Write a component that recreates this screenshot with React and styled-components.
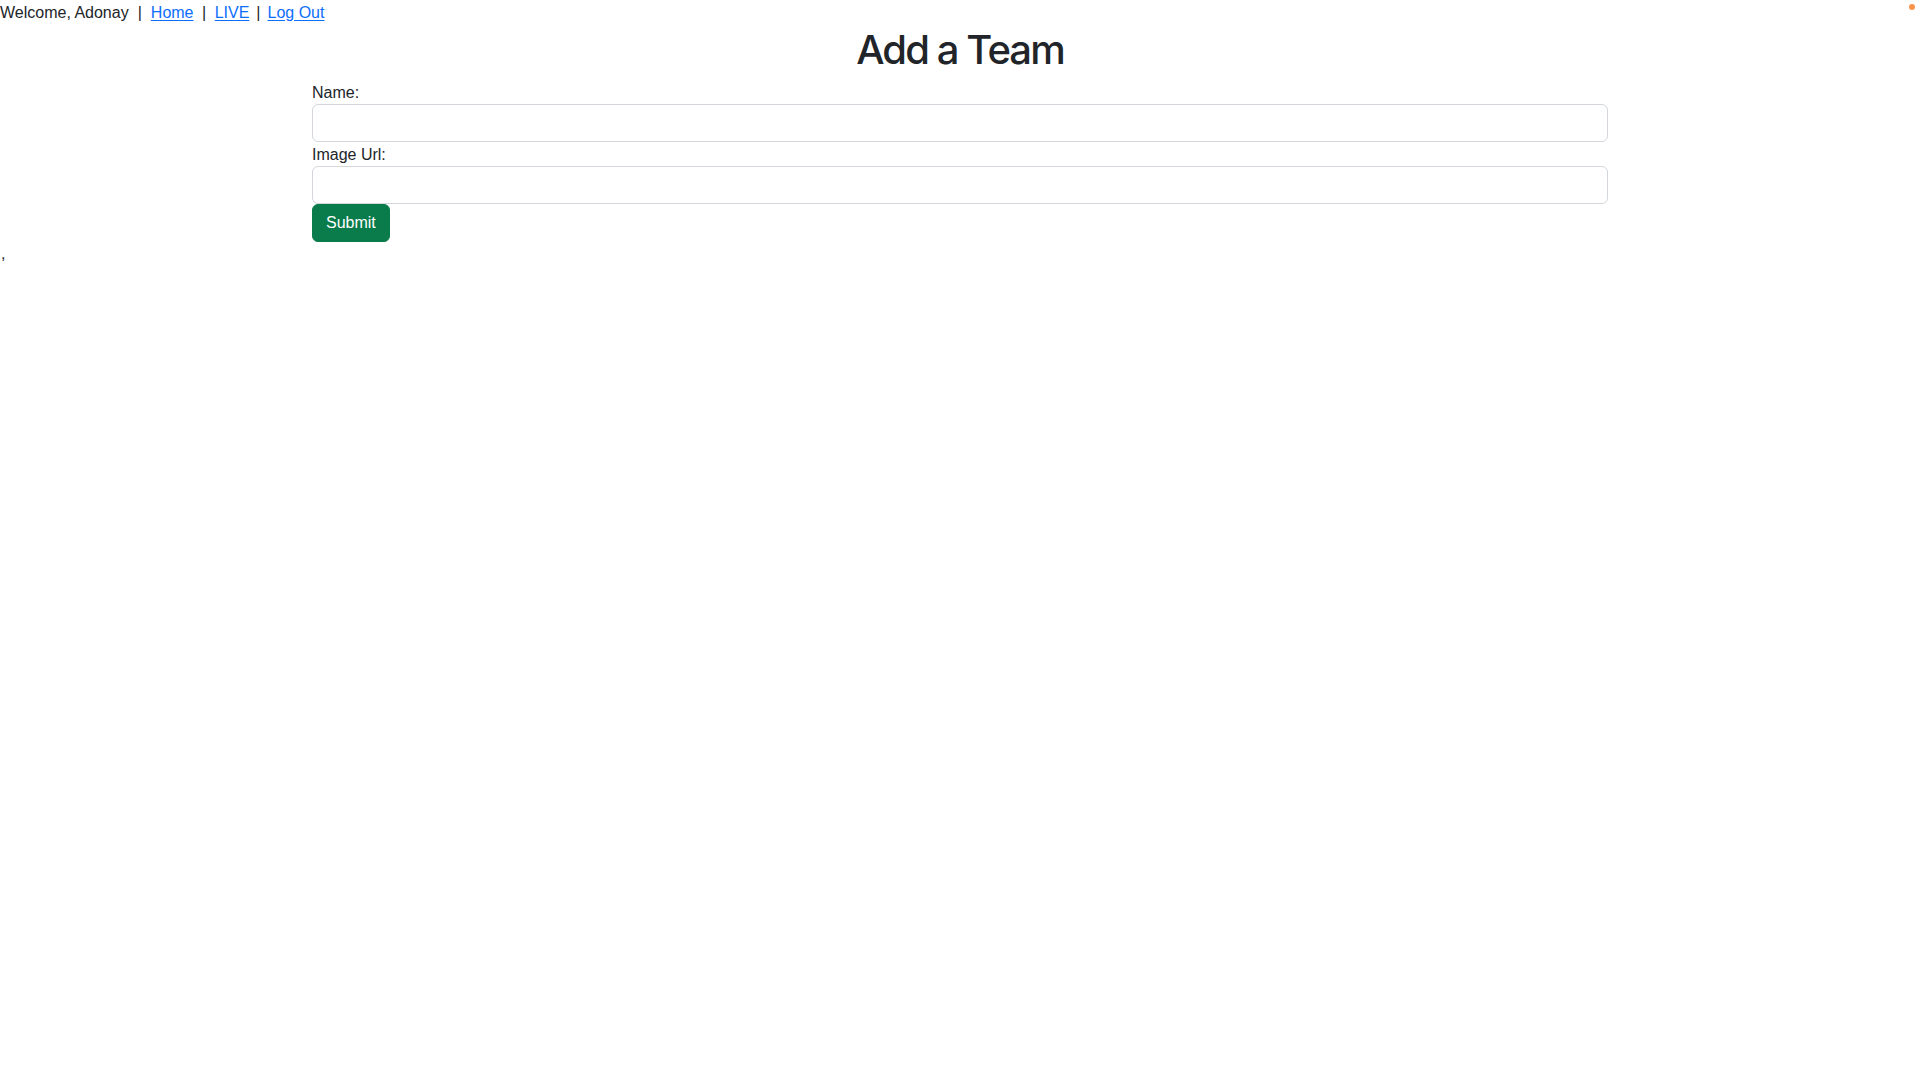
import React from "react";
import styled, { createGlobalStyle } from "styled-components";

const Global = createGlobalStyle`
  html, body { margin: 0; padding: 0; background: #fff; }
  body {
    font-family: "Liberation Sans", Arial, sans-serif;
    font-size: 16px;
    line-height: 1.5;
    color: #212529;
  }
  * { box-sizing: border-box; }
`;

const NavBar = styled.div`
  height: 24px;
  padding-top: 1px;
  line-height: 24px;
  white-space: nowrap;
`;

const NavLink = styled.a`
  color: #0d6efd;
  text-decoration: underline;
  text-underline-offset: 2px;
`;

const Sep = styled.span`
  display: inline-block;
  margin: 0 ${(p) => p.$gap}px;
`;

const Container = styled.div`
  max-width: 1320px;
  margin: 0 auto;
  padding: 0 12px;
`;

const Title = styled.h1`
  margin: 0 0 6px;
  padding-top: 2px;
  text-align: center;
  font-family: Inter, "Liberation Sans", sans-serif;
  font-size: 40px;
  font-weight: 500;
  letter-spacing: -1.9px;
  line-height: 48px;
  color: #212529;
`;

const Label = styled.label`
  display: block;
  height: 24px;
  padding-top: 1px;
  line-height: 24px;
`;

const Input = styled.input`
  display: block;
  width: 100%;
  height: 38px;
  padding: 6px 12px;
  font: inherit;
  border: 1px solid #d3d7dc;
  border-radius: 6px;
  background: #fff;
  outline: none;
`;

const Button = styled.button`
  display: inline-block;
  height: 38px;
  padding: 6px 13px;
  font: inherit;
  line-height: 24px;
  color: #fff;
  background: #0a7b4b;
  border: 1px solid #0a7b4b;
  border-radius: 6px;
  cursor: pointer;
`;

const Trailer = styled.div`
  line-height: 24px;
  padding-left: 1px;
`;

const Dot = styled.span`
  position: absolute;
  top: 4px;
  right: 5px;
  width: 6px;
  height: 6px;
  border-radius: 50%;
  background: #f7944a;
`;

export default function App() {
  return (
    <>
      <Global />
      <Dot />
      <NavBar>
        Welcome, Adonay
        <Sep $gap={9}>|</Sep>
        <NavLink href="#">Home</NavLink>
        <Sep $gap={8.5}>|</Sep>
        <NavLink href="#">LIVE</NavLink>
        <Sep $gap={7}>|</Sep>
        <NavLink href="#">Log Out</NavLink>
      </NavBar>
      <Container>
        <Title>Add a Team</Title>
        <form onSubmit={(e) => e.preventDefault()}>
          <Label htmlFor="name">Name:</Label>
          <Input id="name" type="text" />
          <Label htmlFor="img">Image Url:</Label>
          <Input id="img" type="text" />
          <Button type="submit">Submit</Button>
        </form>
      </Container>
      <Trailer>,</Trailer>
    </>
  );
}
